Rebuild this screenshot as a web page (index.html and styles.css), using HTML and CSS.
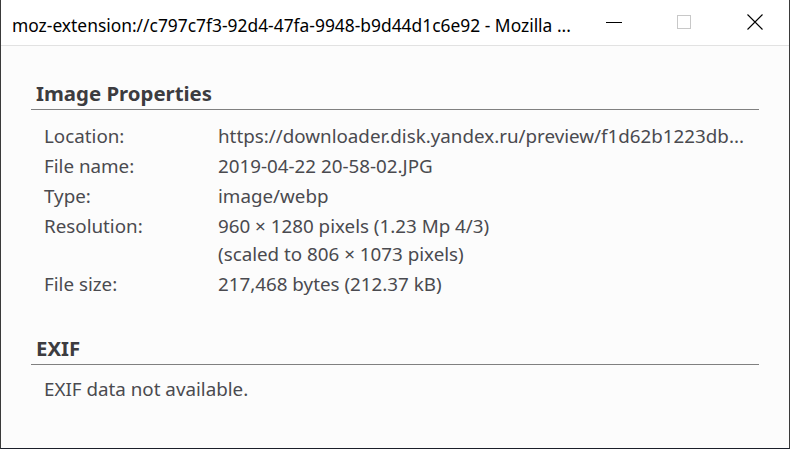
FILE: index.html
```html
<!DOCTYPE html>
<html>
<head>
<meta charset="utf-8">
<link rel="stylesheet" href="styles.css">
</head>
<body>
<div class="window">
  <div class="titlebar">
    <div class="title">moz-extension://c797c7f3-92d4-47fa-9948-b9d44d1c6e92 - Mozilla ...</div>
    <div class="controls">
      <div class="ctl ctl-min"><svg width="16" height="16" viewBox="0 0 16 16"><path d="M0 8.5h16" stroke="#000" stroke-width="1"/></svg></div>
      <div class="ctl ctl-max"><svg width="16" height="16" viewBox="0 0 16 16"><rect x="1.5" y="1.5" width="13" height="13" fill="none" stroke="#c8c8c8" stroke-width="1"/></svg></div>
      <div class="ctl ctl-close"><svg width="16" height="16" viewBox="0 0 16 16"><path d="M0.5 0.5L15.5 15.5M15.5 0.5L0.5 15.5" stroke="#000" stroke-width="1.1"/></svg></div>
    </div>
  </div>
  <div class="content">
    <section class="section">
      <h2 class="heading">Image Properties</h2>
      <div class="rows">
        <div class="row"><div class="label">Location:</div><div class="value">https://downloader.disk.yandex.ru/preview/f1d62b1223db...</div></div>
        <div class="row"><div class="label">File name:</div><div class="value">2019-04-22 20-58-02.JPG</div></div>
        <div class="row"><div class="label">Type:</div><div class="value">image/webp</div></div>
        <div class="row"><div class="label">Resolution:</div><div class="value">960 × 1280 pixels (1.23 Mp 4/3)<br>(scaled to 806 × 1073 pixels)</div></div>
        <div class="row"><div class="label">File size:</div><div class="value">217,468 bytes (212.37 kB)</div></div>
      </div>
    </section>
    <section class="section exif">
      <h2 class="heading">EXIF</h2>
      <p class="note">EXIF data not available.</p>
    </section>
  </div>
</div>
</body>
</html>
```
FILE: styles.css
```css
html, body {
  margin: 0;
  padding: 0;
  width: 790px;
  height: 449px;
  overflow: hidden;
  background: #fcfcfc;
}
.window {
  width: 790px;
  height: 449px;
  box-sizing: border-box;
  display: flex;
  flex-direction: column;
  border-left: 1px solid #3a3a3a;
  border-right: 1px solid #3a3a3a;
  border-bottom: 1px solid #1b1f2a;
  font-family: "Noto Sans", "Open Sans", sans-serif;
}
.titlebar {
  height: 46px;
  flex: none;
  background: #fff;
  border-bottom: 1px solid #e2e2e2;
  display: flex;
  align-items: center;
  justify-content: space-between;
  box-sizing: border-box;
}
.title {
  padding-left: 11px;
  padding-top: 5px;
  font-size: 17.4px;
  color: #000;
  white-space: nowrap;
}
.controls {
  display: flex;
  height: 100%;
}
.ctl {
  width: 69px;
  display: flex;
  align-items: center;
  justify-content: center;
  padding-bottom: 1px;
}
.ctl-min {
  width: 68px;
}
.ctl-max {
  width: 72px;
}
.content {
  flex: 1;
  background: #fcfcfc;
  padding: 0 30px 0 30px;
  color: #4a4a4f;
}
.section {
  margin-top: 35px;
}
.heading {
  margin: 0;
  font-size: 20.4px;
  line-height: 24px;
  font-weight: bold;
  color: #3c3c40;
  padding: 0 0 4px 5px;
  border-bottom: 1px solid #808080;
}
.rows {
  padding: 11px 0 0 13px;
}
.row {
  display: flex;
  font-size: 18.8px;
  line-height: 28px;
  padding: 1px 0;
}
.label {
  width: 174px;
  flex: none;
}
.value {
  white-space: nowrap;
}
.exif {
  margin-top: 37px;
}
.note {
  margin: 0;
  padding: 10px 0 0 13px;
  font-size: 18.8px;
  line-height: 28px;
}
```
